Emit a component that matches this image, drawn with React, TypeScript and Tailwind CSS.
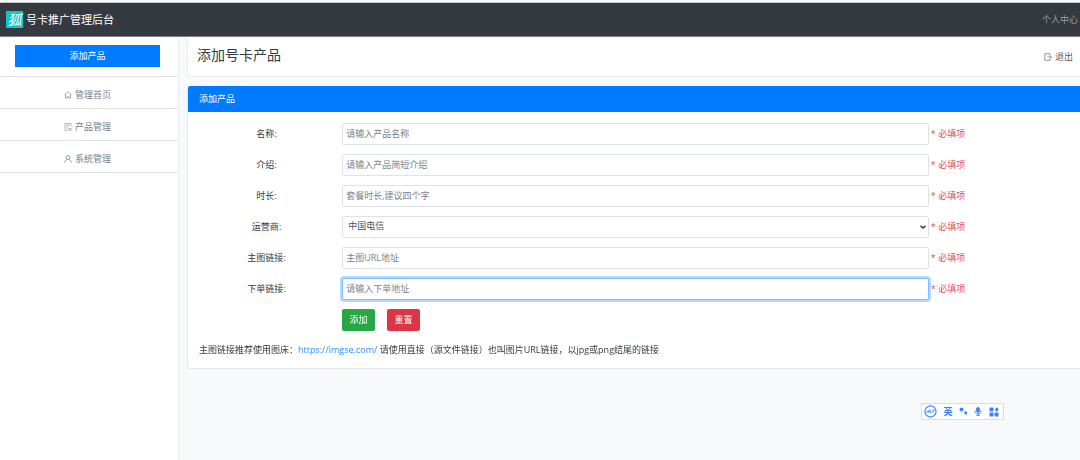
import type { ReactNode } from 'react'

const MENU = [
  { label: '管理首页', icon: <HomeIcon /> },
  { label: '产品管理', icon: <ProductIcon /> },
  { label: '系统管理', icon: <UserIcon /> },
]

const CONTROL =
  'block w-full h-[22px] pb-[2px] rounded-[2px] border border-[#dfe2e6] bg-white text-[9px] text-[#495057] placeholder:text-[#7b838a] outline-none focus:border-[#80bdff] focus:ring-2 focus:ring-[#b5d8ff]'

function HomeIcon() {
  return (
    <svg viewBox="0 0 16 16" className="w-2 h-2" fill="none" stroke="currentColor" strokeWidth="1.3">
      <path d="M1 7.500 8 1.500l7 6M3 6.500V14h3.500M13 6.500V14H9.500M6.500 14v-2.500h3V14" />
    </svg>
  )
}

function ProductIcon() {
  return (
    <svg viewBox="0 0 16 16" className="w-2 h-2" fill="none" stroke="currentColor" strokeWidth="1.1">
      <path d="M14 7V1H2v14h5M4.500 4.500h7M4.500 8h4M4.500 11.500h2M9 11h5.500v3.500H10z" />
    </svg>
  )
}

function UserIcon() {
  return (
    <svg viewBox="0 0 16 16" className="w-2 h-2" fill="none" stroke="currentColor" strokeWidth="1.6">
      <circle cx="8" cy="5" r="4" />
      <path d="M1.500 15.500c0-3.500 2-5.500 4-6.500M14.500 15.500c0-3.500-2-5.500-4-6.500" />
    </svg>
  )
}

function ExitIcon() {
  return (
    <svg viewBox="0 0 16 16" className="w-2 h-2" fill="none" stroke="currentColor" strokeWidth="1.3">
      <path d="M12 5V1.500H1.500v13H12V11M6.500 8H15M12.500 5.500 15 8l-2.500 2.500" />
    </svg>
  )
}

function Field({ id, label, children }: { id: string; label: string; children: ReactNode }) {
  return (
    <div className="grid grid-cols-[17%_66%_1fr] items-center">
      <label htmlFor={id} className="text-center">
        {label}:
      </label>
      {children}
      <span className="pl-[2px] text-[#dc4c59]">* 必填项</span>
    </div>
  )
}

function InputBar() {
  return (
    <div className="fixed left-[921px] top-[403px] flex h-[17px] w-[83px] items-center justify-between border border-[#dadde3] bg-white pl-[2px] pr-1 text-[#3f82f7]">
      <svg viewBox="0 0 28 28" className="w-[13px] h-[13px]" fill="none" stroke="currentColor">
        <circle cx="14" cy="14" r="12" strokeWidth="2.600" />
        <path d="M6 17l2-5M9 17l2-6h3M10 14h3M15 11l-1 6h2M19 17l2-6M18 11h5" strokeWidth="1.800" />
      </svg>
      <span className="text-[9px] font-bold leading-none">英</span>
      <svg viewBox="0 0 18 18" className="w-[9px] h-[9px]" fill="currentColor">
        <circle cx="5" cy="5" r="4" />
        <path d="M10.500 10a3.200 3.200 0 1 1 5.500 3.500c-.8 2-2 3.500-3.500 4 .8-1 1.200-2 1-3-2-.3-3.300-2.500-3-4.500z" />
      </svg>
      <svg viewBox="0 0 18 20" className="w-2 h-[9px]" fill="none" stroke="currentColor" strokeWidth="2">
        <rect x="5.500" y="1" width="7" height="11" rx="3.500" fill="currentColor" />
        <path d="M2 8c0 10 14 10 14 0M9 15.500V19M5.500 19h7" />
      </svg>
      <svg viewBox="0 0 20 20" className="w-[10px] h-[10px]" fill="currentColor">
        <rect x="1" y="1" width="8" height="8" rx="1.500" />
        <rect x="1" y="11" width="8" height="8" rx="1.500" />
        <rect x="11" y="11" width="8" height="8" rx="1.500" />
        <path d="M15.500 0.500 19.500 5l-4 4.500-4-4.500z" />
      </svg>
    </div>
  )
}

export default function App() {
  return (
    <div className="flex min-h-screen flex-col bg-[#f8f9fa] font-['Open_Sans','Noto_Sans_CJK_SC',sans-serif] text-[9px] leading-[14px] text-[#343a40]">
      <header className="mt-[2px] flex h-[35px] items-center justify-between border-y border-t-[#c4c6c9] border-b-[#7b8087] bg-[#343a40] pl-[6px] pr-[2px]">
        <a href="#" className="flex items-center gap-[3px] text-[11px] text-white">
          <span className="flex h-[17px] w-[17px] items-center justify-center bg-[#14c4c4] text-[14px] italic leading-none text-white">
            狐
          </span>
          号卡推广管理后台
        </a>
        <a href="#" className="text-[#9a9da0]">
          个人中心
        </a>
      </header>

      <div className="flex flex-1">
        <aside className="w-1/6 max-w-[179px] shrink-0 border-r border-[#e8eaed] bg-white">
          <div className="border-b border-[#e3e6e9] pl-[15px] pt-2 pb-[9px] pr-[18px]">
            <button type="button" className="block h-[22px] w-full bg-[#007bff] text-white">
              添加产品
            </button>
          </div>
          <nav>
            {MENU.map((item) => (
              <a
                key={item.label}
                href="#"
                className="flex h-8 items-center justify-center gap-[3px] border-b border-[#e3e6e9] pt-1 pr-[3px] text-[#7a8087]"
              >
                {item.icon}
                {item.label}
              </a>
            ))}
          </nav>
        </aside>

        <main className="min-w-0 flex-1 pl-2">
          <div className="flex h-10 items-center justify-between border-b border-l border-[#e9ebee] bg-white pl-[9px] pr-[7px]">
            <h1 className="pb-[3px] text-[14px]">添加号卡产品</h1>
            <a href="#" className="flex items-center gap-[3px] text-[#5a6067]">
              <ExitIcon />
              退出
            </a>
          </div>

          <section className="mt-[9px] rounded-l-[2px] border-b border-l border-[#e6e8eb] bg-white">
            <h2 className="flex h-[26px] items-center rounded-tl-[2px] bg-[#007bff] pl-[11px] text-white">添加产品</h2>
            <form className="flex flex-col gap-[9px] pt-[11px] pl-[3px]" onSubmit={(e) => e.preventDefault()}>
              <Field id="name" label="名称">
                <input id="name" type="text" placeholder="请输入产品名称" className={`${CONTROL} px-[3px]`} />
              </Field>
              <Field id="intro" label="介绍">
                <input id="intro" type="text" placeholder="请输入产品简短介绍" className={`${CONTROL} px-[3px]`} />
              </Field>
              <Field id="duration" label="时长">
                <input id="duration" type="text" placeholder="套餐时长,建议四个字" className={`${CONTROL} px-[3px]`} />
              </Field>
              <Field id="carrier" label="运营商">
                <div className="relative">
                  <select id="carrier" className={`${CONTROL} appearance-none px-[5px]`}>
                    <option>中国电信</option>
                    <option>中国移动</option>
                    <option>中国联通</option>
                  </select>
                  <svg
                    viewBox="0 0 12 8"
                    className="pointer-events-none absolute right-[3px] top-[9px] h-1 w-[6px]"
                    fill="none"
                    stroke="#343a40"
                    strokeWidth="3"
                  >
                    <path d="M1 1.500 6 6l5-4.500" />
                  </svg>
                </div>
              </Field>
              <Field id="image" label="主图链接">
                <input id="image" type="text" placeholder="主图URL地址" className={`${CONTROL} px-[3px]`} />
              </Field>
              <Field id="order" label="下单链接">
                <input id="order" type="text" placeholder="请输入下单地址" autoFocus className={`${CONTROL} px-[3px]`} />
              </Field>
              <div className="flex gap-3 pl-[17%]">
                <button type="submit" className="h-[22px] w-[33px] rounded-[2px] bg-[#28a745] text-white">
                  添加
                </button>
                <button type="reset" className="h-[22px] w-[33px] rounded-[2px] bg-[#dc3545] text-white">
                  重置
                </button>
              </div>
            </form>
            <p className="pt-3 pb-[11px] pl-[11px]">
              主图链接推荐使用图床：
              <a href="https://imgse.com/" className="text-[#2b90ff]">
                https://imgse.com/
              </a>{' '}
              请使用直接（源文件链接）也叫图片URL链接，以jpg或png结尾的链接
            </p>
          </section>
        </main>
      </div>

      <InputBar />
    </div>
  )
}
